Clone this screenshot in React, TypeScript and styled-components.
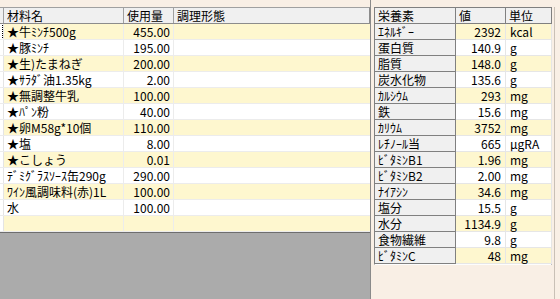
import styled, { createGlobalStyle } from 'styled-components';

const GlobalStyle = createGlobalStyle`
  html, body {
    margin: 0;
    padding: 0;
    background: #f9efe5;
  }
  * { box-sizing: border-box; }
`;

const ingredients = [
  { name: '★牛ﾐﾝﾁ500g', amount: '455.00' },
  { name: '★豚ﾐﾝﾁ', amount: '195.00' },
  { name: '★生)たまねぎ', amount: '200.00' },
  { name: '★ｻﾗﾀﾞ油1.35kg', amount: '2.00' },
  { name: '★無調整牛乳', amount: '100.00' },
  { name: '★ﾊﾟﾝ粉', amount: '40.00' },
  { name: '★卵M58g*10個', amount: '110.00' },
  { name: '★塩', amount: '8.00' },
  { name: '★こしょう', amount: '0.01' },
  { name: 'ﾃﾞﾐｸﾞﾗｽｿｰｽ缶290g', amount: '290.00' },
  { name: 'ﾜｲﾝ風調味料(赤)1L', amount: '100.00' },
  { name: '水', amount: '100.00' },
  { name: '', amount: '' },
];

const nutrients = [
  ['ｴﾈﾙｷﾞｰ', '2392', 'kcal'],
  ['蛋白質', '140.9', 'g'],
  ['脂質', '148.0', 'g'],
  ['炭水化物', '135.6', 'g'],
  ['ｶﾙｼｳﾑ', '293', 'mg'],
  ['鉄', '15.6', 'mg'],
  ['ｶﾘｳﾑ', '3752', 'mg'],
  ['ﾚﾁﾉｰﾙ当', '665', 'μgRA'],
  ['ﾋﾞﾀﾐﾝB1', '1.96', 'mg'],
  ['ﾋﾞﾀﾐﾝB2', '2.00', 'mg'],
  ['ﾅｲｱｼﾝ', '34.6', 'mg'],
  ['塩分', '15.5', 'g'],
  ['水分', '1134.9', 'g'],
  ['食物繊維', '9.8', 'g'],
  ['ﾋﾞﾀﾐﾝC', '48', 'mg'],
];

function App() {
  return (
    <>
      <GlobalStyle />
      <Window>
        <LeftPane>
          <RecipeGrid>
            <RecipeHeader>
              <Corner />
              <HeadCell>材料名</HeadCell>
              <HeadCell>使用量</HeadCell>
              <HeadCell>調理形態</HeadCell>
            </RecipeHeader>
            {ingredients.map((row, i) => (
              <RecipeRow key={i} $odd={i % 2 === 0}>
                <RowMark>{i === 0 && <FocusDots />}</RowMark>
                <Cell>{row.name}</Cell>
                <Cell $right>{row.amount}</Cell>
                <Cell />
              </RecipeRow>
            ))}
          </RecipeGrid>
          <EmptyArea />
        </LeftPane>
        <RightPane>
          <NutrientGrid>
            <NutrientRow>
              <NutHead>栄養素</NutHead>
              <NutHead>値</NutHead>
              <NutHead>単位</NutHead>
            </NutrientRow>
            {nutrients.map(([label, value, unit], i) => (
              <NutrientRow key={label}>
                <LabelCell>{label}</LabelCell>
                <ValueCell $odd={i % 2 === 0} $right>{value}</ValueCell>
                <ValueCell $odd={i % 2 === 0}>{unit}</ValueCell>
              </NutrientRow>
            ))}
          </NutrientGrid>
          <EdgeLine />
        </RightPane>
      </Window>
    </>
  );
}

export default App;

const Window = styled.div`
  width: 560px;
  height: 299px;
  display: flex;
  background: #f9efe5;
  font-family: "Noto Sans CJK JP", "DejaVu Sans", sans-serif;
  font-size: 12px;
  color: #000;
  overflow: hidden;
`;

const LeftPane = styled.div`
  width: 371px;
  display: flex;
  flex-direction: column;
  padding-top: 7px;
  border-right: 1px solid #8a8a8a;
`;

const RecipeGrid = styled.div`
  display: flex;
  flex-direction: column;
  background: #ffffff;
`;

const columns = '4px 120px 50px 196px';

const RecipeHeader = styled.div`
  display: grid;
  grid-template-columns: ${columns};
  height: 17px;
  background: #f0f0f0;
  border-top: 1px solid #a0a0a0;
  border-bottom: 1px solid #8c8c8c;
  border-right: 1px solid #8c8c8c;
`;

const Corner = styled.div`
  border-right: 1px solid #a0a0a0;
`;

const HeadCell = styled.div`
  padding-left: 3px;
  line-height: 15px;
  font-size: 12px;
  border-right: 1px solid #a0a0a0;
  white-space: nowrap;
  &:last-child { border-right: none; }
`;

const RecipeRow = styled.div<{ $odd: boolean }>`
  display: grid;
  grid-template-columns: ${columns};
  height: 16px;
  background: ${({ $odd }) => ($odd ? '#fef7cf' : '#ffffff')};
  border-bottom: 1px solid #ececec;
`;

const RowMark = styled.div`
  background: #ffffff;
  border-right: 1px solid #e4e4e4;
  position: relative;
`;

const FocusDots = styled.div`
  position: absolute;
  top: 1px;
  bottom: 1px;
  left: 2px;
  border-left: 1px dotted #000;
`;

const Cell = styled.div<{ $right?: boolean }>`
  padding: 0 3px;
  line-height: 15px;
  white-space: nowrap;
  text-align: ${({ $right }) => ($right ? 'right' : 'left')};
  border-right: 1px solid #ececec;
  &:last-child { border-right: none; }
`;

const EmptyArea = styled.div`
  flex: 1;
  background: #ababab;
  border-top: 1px solid #6e6e6e;
`;

const RightPane = styled.div`
  flex: 1;
  display: flex;
  padding: 7px 0 0 3px;
`;

const NutrientGrid = styled.div`
  width: 178px;
  align-self: flex-start;
  display: flex;
  flex-direction: column;
  border: 1px solid #808080;
  border-bottom-color: #fdfdfd;
  background: #ffffff;
`;

const nutColumns = '81px 50px 46px';

const NutrientRow = styled.div`
  display: grid;
  grid-template-columns: ${nutColumns};
  height: 16px;
`;

const NutHead = styled.div`
  background: #f0f0f0;
  padding-left: 3px;
  line-height: 15px;
  font-size: 12px;
  border-right: 1px solid #808080;
  border-bottom: 1px solid #808080;
`;

const LabelCell = styled.div`
  background: #f0f0f0;
  padding-left: 3px;
  line-height: 15px;
  white-space: nowrap;
  border-right: 1px solid #808080;
  border-bottom: 1px solid #808080;
`;

const ValueCell = styled.div<{ $odd: boolean; $right?: boolean }>`
  background: ${({ $odd }) => ($odd ? '#fef7cf' : '#ffffff')};
  padding: 0 4px;
  line-height: 15px;
  white-space: nowrap;
  text-align: ${({ $right }) => ($right ? 'right' : 'left')};
  border-right: 1px solid #e6e6e6;
  border-bottom: 1px solid #e6e6e6;
`;

const EdgeLine = styled.div`
  margin-left: 2px;
  width: 1px;
  align-self: stretch;
  background: #c9c0b6;
`;
